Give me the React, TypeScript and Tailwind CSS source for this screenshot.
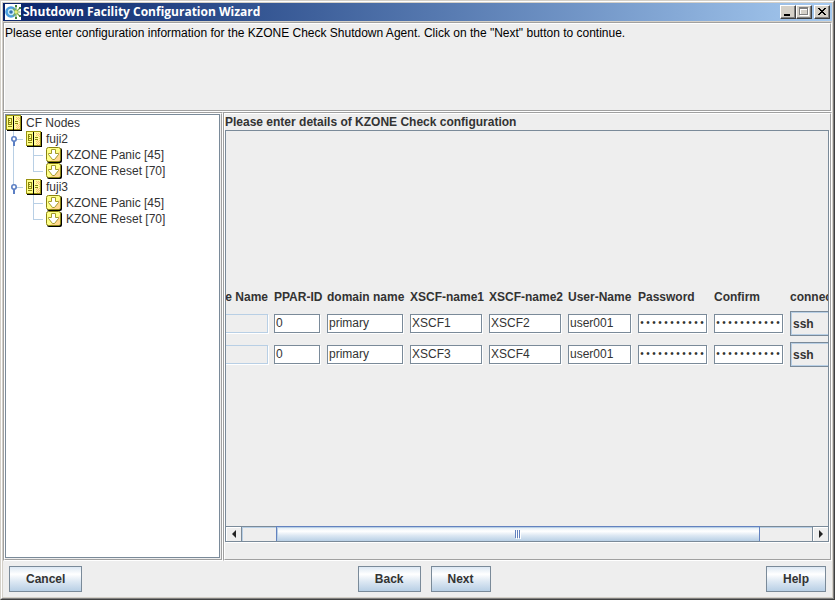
import { useLayoutEffect, useRef, useState } from 'react'
import type { ReactNode } from 'react'

const CONTENT_WIDTH = 709
const SCROLL_START = 42

const agents = [
  { id: 'fuji2', node: 'fuji2', ppar: '0', domain: 'primary', xscf1: 'XSCF1', xscf2: 'XSCF2', user: 'user001' },
  { id: 'fuji3', node: 'fuji3', ppar: '0', domain: 'primary', xscf1: 'XSCF3', xscf2: 'XSCF4', user: 'user001' },
]

const tree = [
  { name: 'fuji2', agents: ['KZONE Panic [45]', 'KZONE Reset [70]'] },
  { name: 'fuji3', agents: ['KZONE Panic [45]', 'KZONE Reset [70]'] },
]

const Etched = ({ className = '', children }: { className?: string; children?: ReactNode }) => (
  <div className={`flex border border-[#a0a0a0] border-r-white border-b-white ${className}`}>
    <div className="flex min-w-0 flex-1 flex-col border border-white border-r-[#a0a0a0] border-b-[#a0a0a0]">{children}</div>
  </div>
)

const AppIcon = () => (
  <svg className="size-4 shrink-0 bg-white" viewBox="0 0 16 16">
    <circle cx="6" cy="8" r="4.5" fill="#c9ecf7" stroke="#4a9fe0" strokeWidth="2.6" />
    <circle cx="6" cy="8" r="1.800" fill="#2f6fb0" />
    <path d="M11 8V2M11 8l4-4M11 8h4.500M11 8l4 4.500M11 8v6M11 8L8 4.500M11 8l-3 4" stroke="#7fae4c" strokeWidth="1.2" />
    <circle cx="11" cy="8" r="1.700" fill="#e6ee7a" />
    <path d="M10 1h2v2h-2zM14 3h2v2h-2zM14 11h2v2h-2zM10 13h2v2h-2z" fill="#3f7f3a" />
  </svg>
)

const NodeIcon = () => (
  <svg className="size-4 shrink-0" viewBox="0 0 16 16" shapeRendering="crispEdges">
    <path d="M1 1h15v15H1z" fill="#000" />
    <path d="M0 0h15v15H0z" fill="#999210" />
    <path d="M1 1h6v13H1z" fill="#ffff88" />
    <path d="M8 1h6v13H8z" fill="#ffff99" />
    <path d="M7 1h1v15H7z" fill="#000" />
    <path d="M2 3h4v1H2zM2 3h1v7H2zM5 3h1v7H5zM2 9h4v1H2zM3 5h1v1H3zM3 7h2v1H3zM2 11h4v1H2zM9 6h3v1H9zM9 8h3v1H9z" fill="#8a8410" />
    <path
      d="M10 2h1v1h-1zM12 2h1v1h-1zM11 3h1v1h-1zM13 3h1v1h-1zM12 4h1v1h-1zM10 4h1v1h-1zM13 5h1v1h-1zM13 7h1v1h-1zM13 9h1v1h-1zM11 9h1v1h-1zM12 10h1v1h-1zM10 10h1v1h-1zM11 11h1v1h-1zM13 11h1v1h-1zM12 12h1v1h-1zM10 12h1v1h-1zM13 13h1v1h-1zM11 13h1v1h-1z"
      fill="#f9b880"
    />
  </svg>
)

const AgentIcon = () => (
  <svg className="size-4 shrink-0" viewBox="0 0 16 16">
    <rect x="1" y="1" width="15" height="15" rx="2" fill="#000" />
    <rect x="0.500" y="0.500" width="14" height="14" rx="2" fill="#ffff88" stroke="#8a8410" />
    <path d="M14 4v9l-1 1H4z" fill="#ffd790" />
    <path d="M5.500 2.500h4v4h3v1L8.500 12.500h-2L2.500 7.500v-1h3z" fill="#fff" stroke="#a39b2a" />
  </svg>
)

// connector cell of the tree, 20px wide and one row high
const Line = ({ d, handle }: { d: string; handle?: boolean }) => (
  <svg className="h-4 w-5 shrink-0" viewBox="0 0 20 16">
    <path d={d} stroke="#b8cfe5" fill="none" shapeRendering="crispEdges" />
    {handle && (
      <>
        <path d="M8 9v6" stroke="#5b7fc4" strokeWidth="2" />
        <circle cx="8" cy="8" r="2.200" fill="#fff" stroke="#5b7fc4" strokeWidth="1.600" />
      </>
    )}
  </svg>
)

const Tree = () => (
  <ul className="min-h-0 flex-1 overflow-hidden border border-[#7a8a99] bg-white text-[#333]">
    <li>
      <div className="flex h-4 items-center">
        <NodeIcon />
        <span className="ml-1">CF Nodes</span>
      </div>
      <ul>
        {tree.map((node, i) => {
          const last = i === tree.length - 1
          return (
            <li key={node.name}>
              <div className="flex h-4 items-center">
                <Line handle d={last ? 'M7.500 0V8M10 8.500H17' : 'M7.500 0V16M10 8.500H17'} />
                <NodeIcon />
                <span className="ml-1">{node.name}</span>
              </div>
              <ul>
                {node.agents.map((agent, j) => (
                  <li key={agent} className="flex h-4 items-center">
                    <Line d={last ? '' : 'M7.500 0V16'} />
                    <Line d={j === node.agents.length - 1 ? 'M7.500 0V8.500H17' : 'M7.500 0V16M7.500 8.500H17'} />
                    <AgentIcon />
                    <span className="ml-1">{agent}</span>
                  </li>
                ))}
              </ul>
            </li>
          )
        })}
      </ul>
    </li>
  </ul>
)

const Field = ({ label, value, type = 'text' }: { label: string; value: string; type?: string }) => (
  <td className="p-0 pr-px pb-px">
    <input
      aria-label={label}
      type={type}
      defaultValue={value}
      className={`block h-[19px] w-full border border-[#7a8a99] bg-white text-[#333] shadow-[1px_1px_0_white] outline-none ${
        type === 'password' ? 'font-["Liberation_Mono"] text-[10px]' : 'px-px'
      }`}
    />
  </td>
)

const AgentTable = () => (
  <table className="w-[709px] table-fixed border-separate border-spacing-[6px]">
    <colgroup>
      <col className="w-[78px]" />
      <col className="w-[47px]" />
      <col className="w-[77px]" />
      <col className="w-[73px]" />
      <col className="w-[73px]" />
      <col className="w-[64px]" />
      <col className="w-[70px]" />
      <col className="w-[70px]" />
      <col />
    </colgroup>
    <thead>
      <tr className="h-[15px] text-left leading-[15px] whitespace-nowrap">
        <th className="p-0 text-right">Node Name</th>
        <th className="p-0">PPAR-ID</th>
        <th className="p-0">domain name</th>
        <th className="p-0">XSCF-name1</th>
        <th className="p-0">XSCF-name2</th>
        <th className="p-0">User-Name</th>
        <th className="p-0">Password</th>
        <th className="p-0">Confirm</th>
        <th className="p-0">connection</th>
      </tr>
    </thead>
    <tbody>
      {agents.map((a) => (
        <tr key={a.id} className="h-[25px]">
          <td className="p-0 pb-px">
            <input
              aria-label={`${a.node} node name`}
              disabled
              className="block h-[19px] w-full border border-[#b8cfe5] bg-[#eee] shadow-[1px_1px_0_white]"
            />
          </td>
          <Field label={`${a.node} PPAR-ID`} value={a.ppar} />
          <Field label={`${a.node} domain name`} value={a.domain} />
          <Field label={`${a.node} XSCF-name1`} value={a.xscf1} />
          <Field label={`${a.node} XSCF-name2`} value={a.xscf2} />
          <Field label={`${a.node} User-Name`} value={a.user} />
          <Field label={`${a.node} Password`} value="password001" type="password" />
          <Field label={`${a.node} Confirm`} value="password001" type="password" />
          <td className="p-0">
            <select
              aria-label={`${a.node} connection`}
              className="block h-[25px] w-full appearance-none border border-[#7a8a99] bg-[#eee] px-0.5 font-bold text-[#333] shadow-[inset_1px_1px_0_#b8cfe5,inset_-1px_-1px_0_#b8cfe5] outline-none"
            >
              <option>ssh</option>
              <option>telnet</option>
            </select>
          </td>
        </tr>
      ))}
    </tbody>
  </table>
)

const ScrollPane = ({ children }: { children: ReactNode }) => {
  const view = useRef<HTMLDivElement>(null)
  const [width, setWidth] = useState(602)

  useLayoutEffect(() => {
    if (!view.current) return
    view.current.scrollLeft = SCROLL_START
    setWidth(view.current.clientWidth)
  }, [])

  const thumb = {
    left: `${(SCROLL_START / CONTENT_WIDTH) * 100}%`,
    width: `${Math.min(1, width / CONTENT_WIDTH) * 100}%`,
  }

  return (
    <div className="flex min-h-0 flex-1 flex-col border border-[#7a8a99] shadow-[1px_1px_0_white]">
      <div ref={view} className="flex min-h-0 flex-1 items-center overflow-hidden">
        <div className="shrink-0">{children}</div>
      </div>
      <div className="flex h-[15px] border-t border-[#7a8a99]">
        <button aria-label="Scroll left" className="flex w-4 items-center justify-center border-r border-[#7a8a99] shadow-[inset_1px_1px_0_white]">
          <svg className="h-2 w-1" viewBox="0 0 4 8"><path d="M4 0v8L0 4z" fill="#222" /></svg>
        </button>
        <div className="relative flex-1 shadow-[inset_1px_1px_0_#b8cfe5]">
          <div
            className="absolute -top-px bottom-0 flex items-center justify-center gap-px border border-b-0 border-[#6382bf] bg-[linear-gradient(#dde8f3,#fff_30%,#dde8f3_60%,#b8cfe5)] shadow-[inset_1px_1px_0_#b8cfe5]"
            style={thumb}
          >
            <i className="h-2 w-px bg-[#6382bf] shadow-[1px_1px_0_white]" />
            <i className="h-2 w-px bg-[#6382bf] shadow-[1px_1px_0_white]" />
            <i className="h-2 w-px bg-[#6382bf] shadow-[1px_1px_0_white]" />
          </div>
        </div>
        <button aria-label="Scroll right" className="flex w-4 items-center justify-center border-l border-[#7a8a99] shadow-[inset_1px_1px_0_white]">
          <svg className="h-2 w-1" viewBox="0 0 4 8"><path d="M0 0v8l4-4z" fill="#222" /></svg>
        </button>
      </div>
    </div>
  )
}

const CaptionButton = ({ label, children }: { label: string; children: ReactNode }) => (
  <button
    aria-label={label}
    className="h-3.5 w-4 border border-white border-r-[#404040] border-b-[#404040] bg-[#d4d0c8] shadow-[inset_-1px_-1px_0_#808080]"
  >
    <svg className="h-3 w-3.5" viewBox="0 0 14 12" shapeRendering="crispEdges">{children}</svg>
  </button>
)

const Button = ({ children }: { children: ReactNode }) => (
  <button className="h-[26px] border border-[#7a8a99] bg-[linear-gradient(#dde8f3,#fff_30%,#dde8f3_60%,#b8cfe5)] px-4 font-bold text-[#333]">
    {children}
  </button>
)

const App = () => {
  return (
    <div className='flex h-screen w-full border border-[#d4d0c8] border-r-[#404040] border-b-[#404040] font-["Liberation_Sans",sans-serif] text-[12px] leading-4'>
      <div className="flex min-w-0 flex-1 border border-white border-r-[#808080] border-b-[#808080]">
        <div className="flex min-w-0 flex-1 flex-col border border-[#d4d0c8] bg-[#eee]">
          <header className="flex h-[19px] shrink-0 items-center border-b border-[#d4d0c8] bg-linear-to-r from-[#0a246a] to-[#a6caf0] px-0.5">
            <AppIcon />
            <h1 className='ml-0.5 flex-1 truncate font-["Open_Sans",sans-serif] text-[12px] font-bold text-white'>
              Shutdown Facility Configuration Wizard
            </h1>
            <CaptionButton label="Minimize"><path d="M3 8h6v2H3z" fill="#000" /></CaptionButton>
            <CaptionButton label="Maximize">
              <path d="M3 2h9v8H3z" fill="#fff" />
              <path d="M2 1h9v8H2z" fill="#808080" />
              <path d="M3 3h7v5H3z" fill="#fff" />
              <path d="M4 4h6v4H4z" fill="#d4d0c8" />
            </CaptionButton>
            <span className="w-0.5" />
            <CaptionButton label="Close">
              <path d="M3 2h2v1h1v1h2V3h1V2h2v1h-1v1H9v1H8v1h1v1h1v1h1v1H9V8H8V7H6v1H5v1H3V8h1V7h1V6h1V5H5V4H4V3H3z" fill="#000" />
            </CaptionButton>
          </header>

          <Etched className="h-[90px] shrink-0">
            <p className="mt-px text-black">
              Please enter configuration information for the KZONE Check Shutdown Agent. Click on the "Next" button to continue.
            </p>
          </Etched>

          <main className="flex min-h-0 flex-1">
            <Etched className="w-[220px] shrink-0">
              <div className="flex min-h-0 flex-1 flex-col pr-px pb-px">
                <Tree />
              </div>
            </Etched>
            <Etched className="min-w-0 flex-1">
              <h2 className="font-bold text-[#333]">Please enter details of KZONE Check configuration</h2>
              <div className="mb-4 flex min-h-0 flex-1 flex-col pr-px pb-px text-[#333]">
                <ScrollPane>
                  <AgentTable />
                </ScrollPane>
              </div>
            </Etched>
          </main>

          <footer className="flex shrink-0 justify-between px-1.5 py-[5px]">
            <Button>Cancel</Button>
            <div className="flex gap-2.5">
              <Button>Back</Button>
              <Button>Next</Button>
            </div>
            <Button>Help</Button>
          </footer>
        </div>
      </div>
    </div>
  )
}

export default App
